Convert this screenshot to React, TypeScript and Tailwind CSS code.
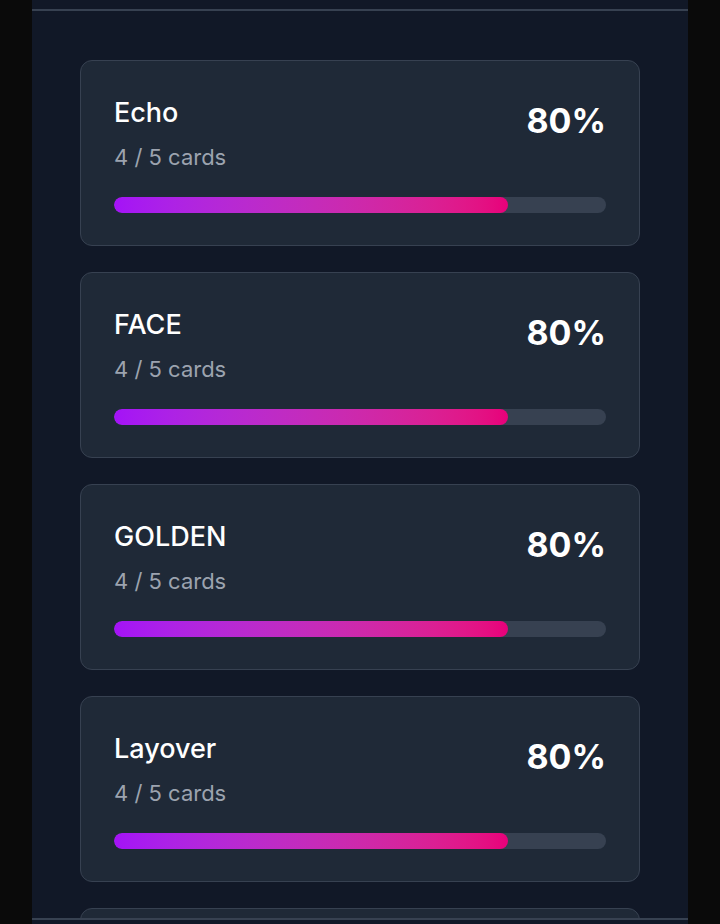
import React from 'react';

type Deck = { name: string; done: number; total: number };

const decks: Deck[] = [
  { name: 'Echo', done: 4, total: 5 },
  { name: 'FACE', done: 4, total: 5 },
  { name: 'GOLDEN', done: 4, total: 5 },
  { name: 'Layover', done: 4, total: 5 },
  { name: 'Mirage', done: 4, total: 5 },
];

const DeckCard: React.FC<{ deck: Deck }> = ({ deck }) => {
  const pct = Math.round((deck.done / deck.total) * 100);
  return (
    <div className="shrink-0 h-[186px] rounded-xl border border-[#374151] bg-[#1f2937] px-[33px] py-8">
      <div className="flex items-start justify-between">
        <div className="pt-[2px]">
          <div className="text-[27px] leading-[36px] font-medium text-white">{deck.name}</div>
          <div className="mt-[12px] text-[22px] leading-[28px] text-[#9ca3af]">
            {deck.done} / {deck.total} cards
          </div>
        </div>
        <div className="mt-[7px] text-[34px] leading-[42px] font-bold text-white">{pct}%</div>
      </div>
      <div className="mt-[26px] h-4 w-full rounded-full bg-[#374151] overflow-hidden">
        <div
          className="h-full rounded-full bg-gradient-to-r from-[#a412f7] to-[#e8007a]"
          style={{ width: `${pct}%` }}
        />
      </div>
    </div>
  );
};

export default function App() {
  return (
    <div
      className="h-[924px] w-[720px] overflow-hidden bg-[#0a0a0a] px-8"
      style={{ fontFamily: 'Inter, "Noto Sans", sans-serif' }}
    >
      <div className="flex h-full flex-col bg-[#111827]">
        <div className="h-[11px] shrink-0 border-b-2 border-[#374151]" />
        <div className="flex flex-1 flex-col gap-[26px] overflow-hidden px-12 pt-[49px]">
          {decks.map((d) => (
            <DeckCard key={d.name} deck={d} />
          ))}
        </div>
        <div className="h-[6px] shrink-0 border-t-2 border-[#374151]" />
      </div>
    </div>
  );
}
